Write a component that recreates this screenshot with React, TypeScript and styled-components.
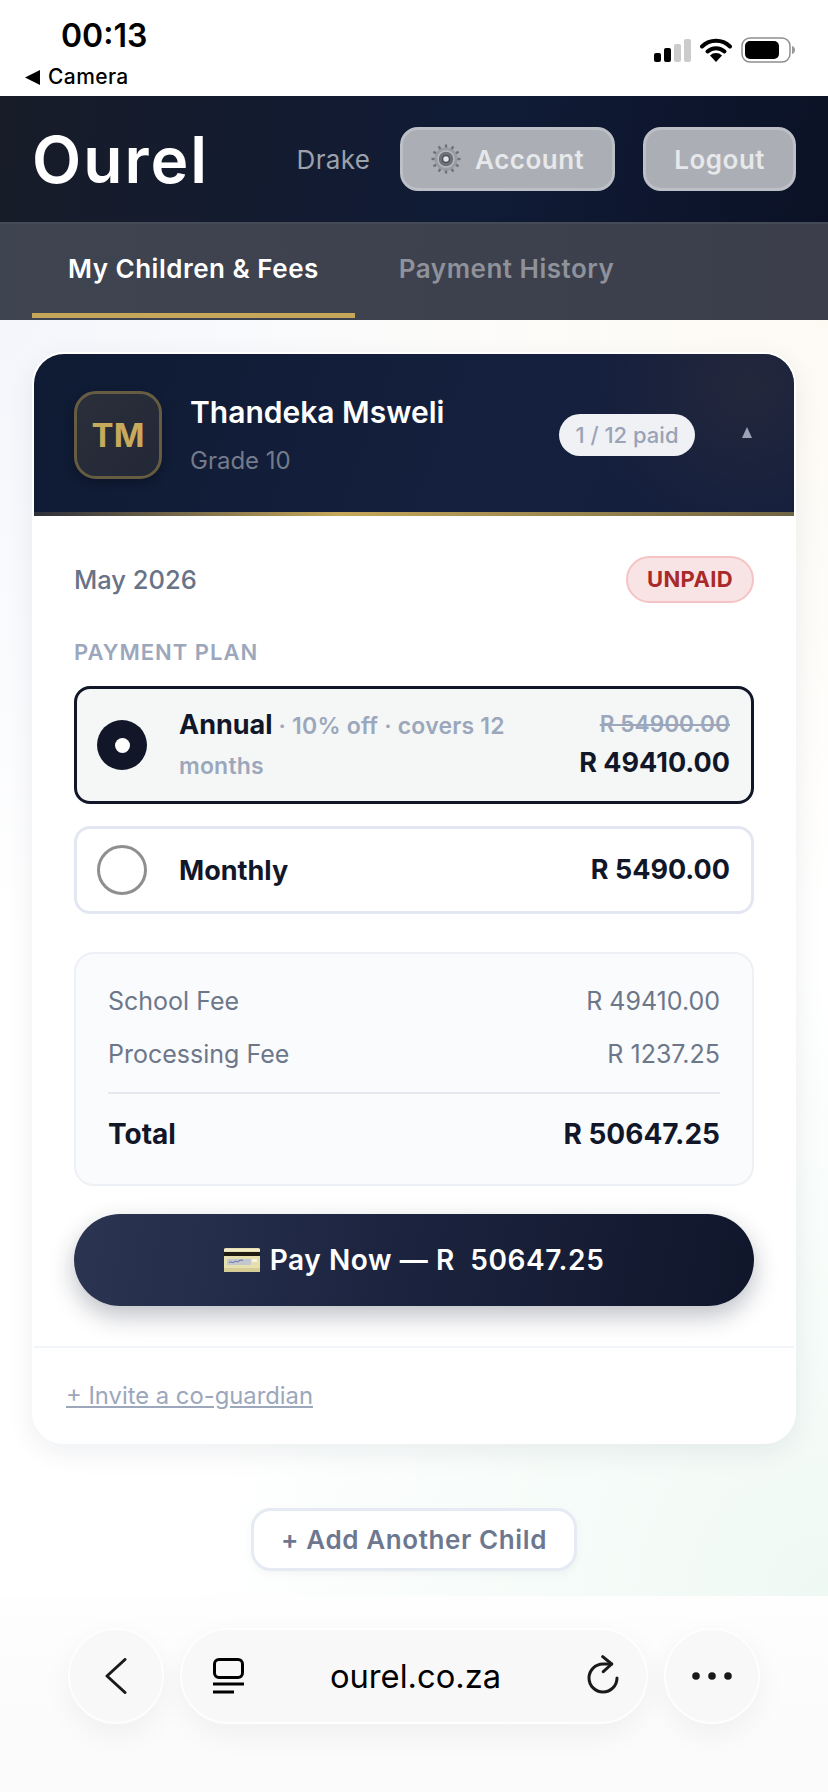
import React from 'react';
import styled, { createGlobalStyle } from 'styled-components';

const GlobalStyle = createGlobalStyle`
  html, body {
    margin: 0;
    padding: 0;
    background: #fff;
    font-family: Inter, "Liberation Sans", sans-serif;
  }
  * {
    box-sizing: border-box;
  }
`;

const Screen = styled.div`
  width: 828px;
  height: 1792px;
  display: flex;
  flex-direction: column;
  overflow: hidden;
`;

const StatusBar = styled.div`
  height: 96px;
  background: #fff;
  display: flex;
  justify-content: space-between;
  color: #000;
  padding: 0 33px 0 25px;
`;
const StatusLeft = styled.div`
  display: flex;
  flex-direction: column;
`;
const Time = styled.div`
  font-size: 32px;
  line-height: 38px;
  font-weight: 600;
  margin: 17px 0 0 36px;
`;
const BackToApp = styled.div`
  display: flex;
  align-items: center;
  gap: 8px;
  font-size: 21px;
  letter-spacing: 0.4px;
  line-height: 24px;
  font-weight: 500;
  margin-top: 10px;
`;
const StatusIcons = styled.div`
  display: flex;
  align-items: center;
  gap: 9px;
  height: 26px;
  margin-top: 37px;
`;

const Header = styled.header`
  height: 126px;
  background: linear-gradient(100deg, #171c28 0%, #101b36 58%, #0b1226 100%);
  display: flex;
  align-items: center;
  padding: 0 32px;
`;
const Logo = styled.div`
  font-size: 64px;
  font-weight: 600;
  letter-spacing: 2px;
  color: #fff;
  margin-right: auto;
`;
const UserName = styled.span`
  font-size: 26px;
  letter-spacing: 0.3px;
  color: #9ca1ac;
  margin-right: 30px;
`;
const HeaderButton = styled.div<{ $gap?: boolean }>`
  height: 64px;
  border-radius: 18px;
  background: #abaeb5;
  border: 3px solid #bcbfc6;
  color: #e7e8ea;
  font-size: 26px;
  letter-spacing: 0.5px;
  font-weight: 600;
  display: flex;
  align-items: center;
  justify-content: center;
  gap: 14px;
  margin-left: ${(p) => (p.$gap ? '28px' : '0')};
  padding: 0 28px;
`;

const TabBar = styled.nav`
  height: 98px;
  background: linear-gradient(90deg, #3e4450, #3c3f4b);
  border-top: 2px solid #444a56;
  display: flex;
  gap: 8px;
  padding: 0 32px;
`;
const Tab = styled.div<{ $active?: boolean }>`
  height: 94px;
  padding: 0 36px;
  display: flex;
  align-items: center;
  font-size: 26px;
  letter-spacing: 0.5px;
  font-weight: 600;
  color: ${(p) => (p.$active ? '#fff' : '#8f929b')};
  border-bottom: 5px solid ${(p) => (p.$active ? '#c6a75a' : 'transparent')};
`;

const Page = styled.main`
  height: 1276px;
  padding: 32px 32px 0;
  display: flex;
  flex-direction: column;
  align-items: center;
  background:
    radial-gradient(circle at 100% 100%, #eff9f4 0%, rgba(241, 249, 245, 0) 42%),
    radial-gradient(circle at 100% 0%, #fdfaf4 0%, rgba(253, 250, 244, 0) 40%),
    radial-gradient(circle at 0% 0%, #f4f6fb 0%, rgba(244, 246, 251, 0) 40%),
    #fff;
`;

const Card = styled.section`
  width: 764px;
  height: 1092px;
  background: #fff;
  border-radius: 32px;
  border: 2px solid #fff;
  box-shadow: 0 8px 28px rgba(20, 30, 50, 0.07);
  overflow: hidden;
  flex-shrink: 0;
`;
const CardHead = styled.div`
  position: relative;
  height: 162px;
  padding: 0 42px 0 40px;
  display: flex;
  align-items: center;
  background: radial-gradient(circle at 94% 20%, #23273c 0%, rgba(35, 39, 60, 0) 22%),
    linear-gradient(110deg, #0f1a33 0%, #15203e 60%, #131e3c 100%);
  &::after {
    content: '';
    position: absolute;
    left: 0;
    right: 0;
    bottom: 0;
    height: 4px;
    background: linear-gradient(90deg, #2d2f3a 0%, #c6a85a 40%, #6f6443 100%);
  }
`;
const Avatar = styled.div`
  width: 88px;
  height: 88px;
  border-radius: 22px;
  background: linear-gradient(135deg, #2b2f3a, #232838);
  border: 3px solid #665c42;
  color: #c8aa5c;
  font-size: 33px;
  font-weight: 700;
  display: flex;
  align-items: center;
  justify-content: center;
  margin-right: 28px;
  box-shadow: 0 4px 10px rgba(0, 0, 0, 0.25);
`;
const ChildInfo = styled.div`
  flex: 1;
`;
const ChildName = styled.div`
  font-size: 30px;
  line-height: 36px;
  font-weight: 600;
  color: #fff;
  margin-bottom: 16px;
`;
const ChildGrade = styled.div`
  font-size: 24px;
  line-height: 30px;
  color: #747b8b;
`;
const PaidPill = styled.div`
  width: 136px;
  height: 42px;
  border-radius: 21px;
  background: #eff1f5;
  color: #9aa3b5;
  font-size: 22px;
  font-weight: 500;
  display: flex;
  align-items: center;
  justify-content: center;
  margin-right: 47px;
`;
const Caret = styled.div`
  width: 0;
  height: 0;
  margin-bottom: 6px;
  border-left: 5px solid transparent;
  border-right: 5px solid transparent;
  border-bottom: 11px solid #9aa3b8;
`;

const CardBody = styled.div`
  padding: 40px 40px 40px;
  border-bottom: 2px solid #f1f4f8;
`;
const MonthRow = styled.div`
  display: flex;
  align-items: center;
  justify-content: space-between;
  height: 46px;
`;
const Month = styled.span`
  font-size: 25.500px;
  font-weight: 500;
  color: #687387;
`;
const Unpaid = styled.span`
  width: 128px;
  height: 47px;
  border-radius: 24px;
  background: #f9e4e5;
  border: 2px solid #f6c3c4;
  color: #a92a2a;
  font-size: 22px;
  font-weight: 700;
  letter-spacing: 0.4px;
  display: flex;
  align-items: center;
  justify-content: center;
`;
const SectionLabel = styled.div`
  font-size: 22px;
  line-height: 26px;
  font-weight: 600;
  color: #9ca7bc;
  letter-spacing: 1px;
  margin: 37px 0 21px;
`;
const PlanRow = styled.div<{ $selected?: boolean }>`
  height: ${(p) => (p.$selected ? '118px' : '88px')};
  border-radius: 16px;
  border: 3px solid ${(p) => (p.$selected ? '#111729' : '#e3e7f1')};
  background: ${(p) => (p.$selected ? '#f5f7f6' : '#fff')};
  display: flex;
  align-items: center;
  padding: 0 21px 0 20px;
  margin-bottom: 22px;
`;
const Radio = styled.div<{ $selected?: boolean }>`
  width: 50px;
  height: 50px;
  border-radius: 50%;
  flex-shrink: 0;
  background: ${(p) => (p.$selected ? '#111729' : '#fff')};
  border: ${(p) => (p.$selected ? '0' : '3px solid #8f8f8f')};
  display: flex;
  align-items: center;
  justify-content: center;
  margin-right: 32px;
  &::after {
    content: '';
    display: ${(p) => (p.$selected ? 'block' : 'none')};
    width: 15px;
    height: 15px;
    border-radius: 50%;
    background: #fff;
  }
`;
const PlanText = styled.div`
  flex: 1;
  font-size: 23px;
  letter-spacing: 0.2px;
  line-height: 40px;
  font-weight: 600;
  color: #9ca7bc;
  max-width: 340px;
`;
const PlanName = styled.span`
  font-size: 27px;
  letter-spacing: 0;
  font-weight: 700;
  color: #111729;
`;
const PlanPrices = styled.div`
  margin-left: auto;
  display: flex;
  flex-direction: column;
  align-items: flex-end;
  gap: 7px;
`;
const OldPrice = styled.span`
  font-size: 22.700px;
  line-height: 28px;
  font-weight: 600;
  color: #9ca7bc;
  text-decoration: line-through;
`;
const Price = styled.span`
  font-size: 27px;
  line-height: 36px;
  font-weight: 700;
  color: #111729;
`;

const Summary = styled.div`
  height: 234px;
  margin-top: 38px;
  border-radius: 20px;
  border: 2px solid #edf0f5;
  background: #fafbfd;
  padding: 21px 32px 0;
`;
const SummaryRow = styled.div`
  display: flex;
  justify-content: space-between;
  font-size: 25px;
  line-height: 53px;
  color: #6d778a;
`;
const TotalRow = styled.div`
  display: flex;
  justify-content: space-between;
  margin-top: 11px;
  padding-top: 17px;
  border-top: 2px solid #e5e8ee;
  font-size: 28px;
  line-height: 46px;
  font-weight: 700;
  color: #111729;
`;
const PayButton = styled.div`
  height: 92px;
  margin-top: 28px;
  border-radius: 46px;
  background: linear-gradient(100deg, #2b3552 0%, #1c2440 45%, #10162a 100%);
  box-shadow: 0 10px 24px rgba(20, 28, 50, 0.28);
  color: #fff;
  font-size: 28px;
  letter-spacing: 0.6px;
  font-weight: 600;
  white-space: pre;
  display: flex;
  align-items: center;
  justify-content: center;
  gap: 10px;
`;
const CardFoot = styled.div`
  padding: 32px 32px;
`;
const InviteLink = styled.a`
  font-size: 23.800px;
  line-height: 32px;
  color: #9ca7bc;
  text-decoration: underline;
`;
const AddChild = styled.div`
  width: 326px;
  height: 63px;
  margin-top: 64px;
  border-radius: 20px;
  background: #fff;
  border: 3px solid #e6eaf2;
  box-shadow: 0 3px 8px rgba(20, 30, 50, 0.04);
  color: #6d778f;
  font-size: 26px;
  letter-spacing: 0.6px;
  font-weight: 600;
  display: flex;
  align-items: center;
  justify-content: center;
  flex-shrink: 0;
`;

const BrowserBar = styled.div`
  flex: 1;
  background: linear-gradient(180deg, #fefefe 0%, #fafafa 100%);
  display: flex;
  justify-content: center;
  gap: 16px;
  padding-top: 32px;
`;
const RoundButton = styled.div`
  width: 96px;
  height: 96px;
  border-radius: 50%;
  background: #f8f8f8;
  border: 2px solid #fefefe;
  box-shadow: 0 10px 30px rgba(0, 0, 0, 0.05);
  display: flex;
  align-items: center;
  justify-content: center;
`;
const UrlPill = styled.div`
  width: 468px;
  height: 96px;
  border-radius: 48px;
  background: #f8f8f8;
  border: 2px solid #fefefe;
  box-shadow: 0 10px 30px rgba(0, 0, 0, 0.05);
  display: flex;
  align-items: center;
  justify-content: space-between;
  padding: 0 27px 0 31px;
`;
const Url = styled.span`
  font-size: 32.700px;
  color: #000;
`;

const SignalIcon = () => (
  <svg width="37" height="23" viewBox="0 0 37 23">
    <rect x="0" y="14" width="7" height="9" rx="2" fill="#000" />
    <rect x="10" y="9" width="7" height="14" rx="2" fill="#000" />
    <rect x="20" y="5" width="7" height="18" rx="2" fill="#ccc" />
    <rect x="30" y="0" width="7" height="23" rx="2" fill="#ccc" />
  </svg>
);

const WifiIcon = () => (
  <svg width="32" height="24" viewBox="0 0 32 24">
    <path d="M2 8.500a20 20 0 0 1 28 0" fill="none" stroke="#000" strokeWidth="4" strokeLinecap="round" />
    <path d="M7.500 13.500a12.500 12.500 0 0 1 17 0" fill="none" stroke="#000" strokeWidth="4" strokeLinecap="round" />
    <path d="M16 24l-6-6.500a8.500 8.500 0 0 1 12 0z" fill="#000" />
  </svg>
);

const BatteryIcon = () => (
  <svg width="54" height="26" viewBox="0 0 54 26">
    <rect x="1" y="1" width="48" height="24" rx="8" fill="none" stroke="#8e8e8e" strokeWidth="1.500" />
    <rect x="4" y="4" width="34" height="18" rx="5" fill="#000" />
    <path d="M51 9c2 .5 3 2 3 4s-1 3.500-3 4z" fill="#999" />
  </svg>
);

const GearIcon = () => (
  <svg width="30" height="30" viewBox="0 0 30 30">
    <g stroke="#6f7178" strokeWidth="2.400">
      {[0, 30, 60, 90, 120, 150, 180, 210, 240, 270, 300, 330].map((deg) => (
        <line key={deg} x1="15" y1="0.500" x2="15" y2="6" transform={`rotate(${deg} 15 15)`} />
      ))}
    </g>
    <circle cx="15" cy="15" r="11.500" fill="#9a9ca2" />
    <circle cx="15" cy="15" r="8" fill="#6f7178" stroke="#b9bbc0" strokeWidth="1.500" />
    <circle cx="15" cy="15" r="3.500" fill="#e3e4e6" stroke="#4f5157" strokeWidth="1.500" />
  </svg>
);

const CardIcon = () => (
  <svg width="36" height="24" viewBox="0 0 36 24">
    <rect width="36" height="24" rx="1.500" fill="#e6dfae" />
    <rect y="1" width="36" height="2" fill="#f2ecc8" />
    <rect y="4" width="36" height="4" fill="#1f1c14" />
    <rect x="3" y="11" width="24" height="6" fill="#c3c8cf" />
    <path d="M5 15c2-3 3 1 5-1s3 1 5-1 2 0 4-1" fill="none" stroke="#5a68a8" strokeWidth="1" />
    <rect x="28" y="11" width="5" height="3" fill="#f6f3e0" />
    <rect y="20" width="36" height="4" fill="#d6cc98" />
  </svg>
);

const ChevronIcon = () => (
  <svg width="22" height="36" viewBox="0 0 22 36">
    <path d="M20 1.500L2 18l18 16.500" fill="none" stroke="#1a1a1a" strokeWidth="3" strokeLinecap="round" strokeLinejoin="round" />
  </svg>
);

const TabsIcon = () => (
  <svg width="31" height="36" viewBox="0 0 31 36">
    <rect x="1.500" y="1.500" width="28" height="18" rx="4.500" fill="none" stroke="#000" strokeWidth="3" />
    <line x1="0" y1="26" x2="31" y2="26" stroke="#000" strokeWidth="3" />
    <line x1="0" y1="34" x2="21" y2="34" stroke="#000" strokeWidth="3" />
  </svg>
);

const ReloadIcon = () => (
  <svg width="32" height="42" viewBox="0 0 32 42">
    <path d="M24.700 9H16A14 14 0 1 0 30 23" fill="none" stroke="#1a1a1a" strokeWidth="3" strokeLinecap="round" />
    <path d="M15.700 1.700L24.700 9l-8.400 7.700" fill="none" stroke="#1a1a1a" strokeWidth="3" strokeLinecap="round" strokeLinejoin="round" />
  </svg>
);

const DotsIcon = () => (
  <svg width="40" height="8" viewBox="0 0 40 8">
    <circle cx="4" cy="4" r="3.800" fill="#1a1a1a" />
    <circle cx="20" cy="4" r="3.800" fill="#1a1a1a" />
    <circle cx="36" cy="4" r="3.800" fill="#1a1a1a" />
  </svg>
);

const BackTriangle = () => (
  <svg width="15" height="15" viewBox="0 0 15 15">
    <path d="M15 0v15L0 7.500z" fill="#000" />
  </svg>
);

export default function App() {
  return (
    <Screen>
      <GlobalStyle />
      <StatusBar>
        <StatusLeft>
          <Time>00:13</Time>
          <BackToApp>
            <BackTriangle />
            Camera
          </BackToApp>
        </StatusLeft>
        <StatusIcons>
          <SignalIcon />
          <WifiIcon />
          <BatteryIcon />
        </StatusIcons>
      </StatusBar>

      <Header>
        <Logo>Ourel</Logo>
        <UserName>Drake</UserName>
        <HeaderButton>
          <GearIcon />
          Account
        </HeaderButton>
        <HeaderButton $gap>Logout</HeaderButton>
      </Header>

      <TabBar>
        <Tab $active>My Children &amp; Fees</Tab>
        <Tab>Payment History</Tab>
      </TabBar>

      <Page>
        <Card>
          <CardHead>
            <Avatar>TM</Avatar>
            <ChildInfo>
              <ChildName>Thandeka Msweli</ChildName>
              <ChildGrade>Grade 10</ChildGrade>
            </ChildInfo>
            <PaidPill>1 / 12 paid</PaidPill>
            <Caret />
          </CardHead>
          <CardBody>
            <MonthRow>
              <Month>May 2026</Month>
              <Unpaid>UNPAID</Unpaid>
            </MonthRow>
            <SectionLabel>PAYMENT PLAN</SectionLabel>
            <PlanRow $selected>
              <Radio $selected />
              <PlanText>
                <PlanName>Annual</PlanName> · 10% off · covers 12 months
              </PlanText>
              <PlanPrices>
                <OldPrice>R 54900.00</OldPrice>
                <Price>R 49410.00</Price>
              </PlanPrices>
            </PlanRow>
            <PlanRow>
              <Radio />
              <PlanName>Monthly</PlanName>
              <PlanPrices>
                <Price>R 5490.00</Price>
              </PlanPrices>
            </PlanRow>
            <Summary>
              <SummaryRow>
                <span>School Fee</span>
                <span>R 49410.00</span>
              </SummaryRow>
              <SummaryRow>
                <span>Processing Fee</span>
                <span>R 1237.25</span>
              </SummaryRow>
              <TotalRow>
                <span>Total</span>
                <span>R 50647.25</span>
              </TotalRow>
            </Summary>
            <PayButton>
              <CardIcon />
              {'Pay Now — R  50647.25'}
            </PayButton>
          </CardBody>
          <CardFoot>
            <InviteLink>+ Invite a co-guardian</InviteLink>
          </CardFoot>
        </Card>
        <AddChild>+ Add Another Child</AddChild>
      </Page>

      <BrowserBar>
        <RoundButton>
          <ChevronIcon />
        </RoundButton>
        <UrlPill>
          <TabsIcon />
          <Url>ourel.co.za</Url>
          <ReloadIcon />
        </UrlPill>
        <RoundButton>
          <DotsIcon />
        </RoundButton>
      </BrowserBar>
    </Screen>
  );
}
